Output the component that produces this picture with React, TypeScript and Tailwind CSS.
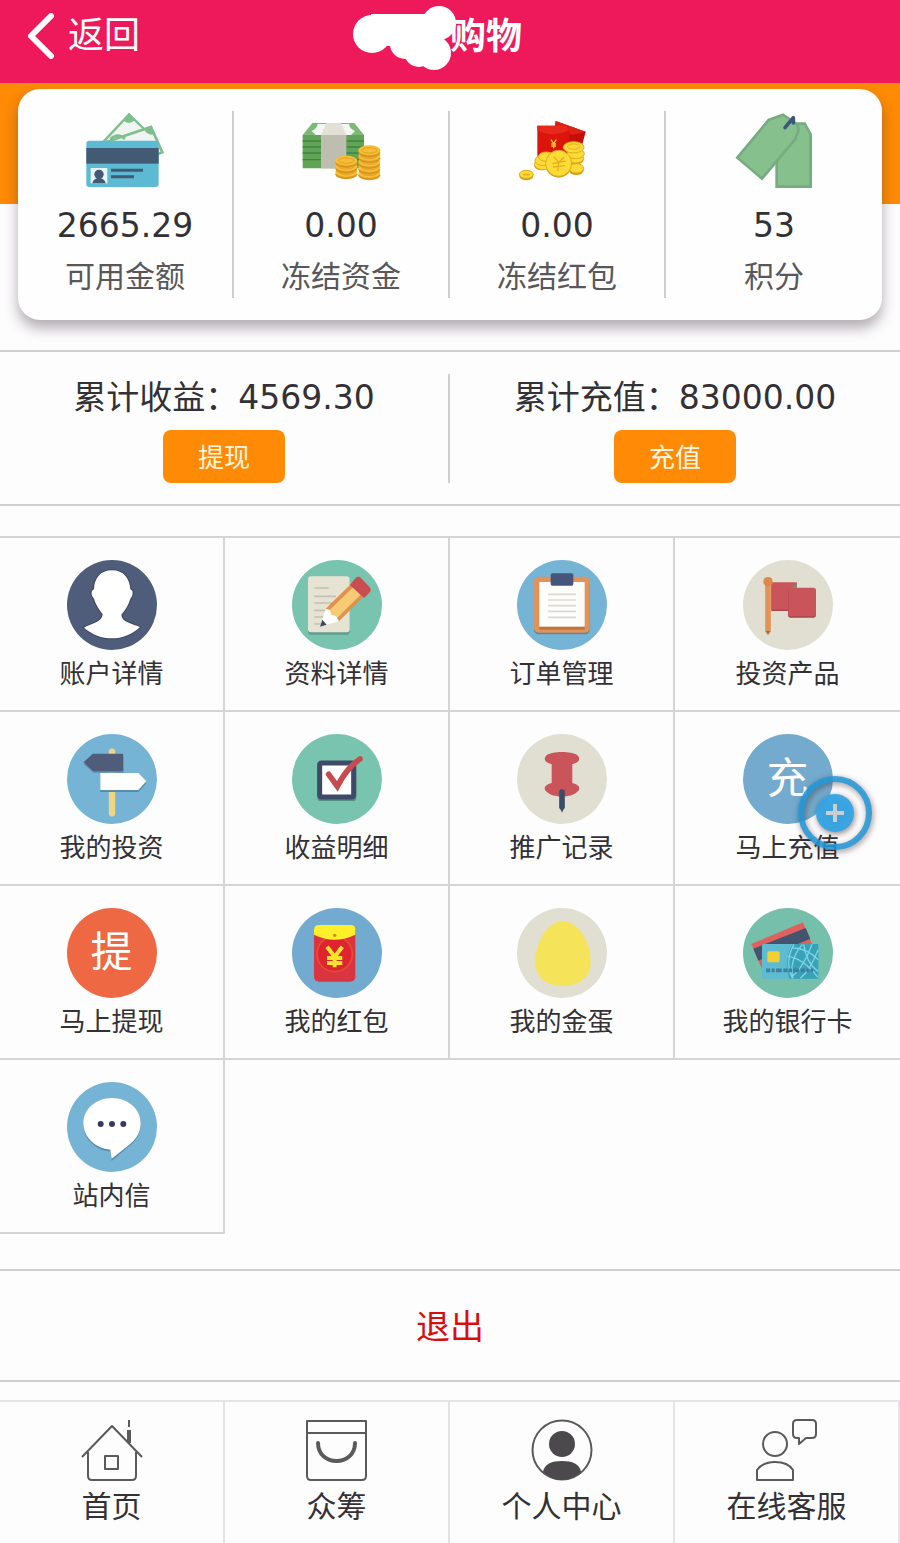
import type { ReactNode } from 'react';

type Entry = { label: string; icon: ReactNode };

function CardIcon({ children }: { children: ReactNode }) {
    return (
        <svg viewBox="0 0 240 240" className="size-20" aria-hidden="true">
            {children}
        </svg>
    );
}

function Disc({ color, children }: { color: string; children?: ReactNode }) {
    return (
        <svg viewBox="0 0 270 270" className="size-[90px]" aria-hidden="true">
            <circle cx="135" cy="135" r="135" fill={color} />
            {children}
        </svg>
    );
}

function NavIcon({ children }: { children: ReactNode }) {
    return (
        <svg
            viewBox="0 0 64 64"
            className="size-16"
            fill="none"
            stroke="#5b595b"
            strokeWidth="2"
            strokeLinejoin="round"
            aria-hidden="true"
        >
            {children}
        </svg>
    );
}

/* ---- balance card ---- */

function BankCardIcon() {
    return (
        <CardIcon>
            <path d="M132 10 L196 72 L182 110 L50 98Z" fill="#f1f5f1" stroke="#7fbf8e" strokeWidth="7" />
            <path d="M132 6 L114 28 Q132 44 151 27Z" fill="#7fbf8e" />
            <path d="M66 92 L198 48 L232 124 L190 140Z" fill="#f1f5f1" stroke="#7fbf8e" strokeWidth="8" />
            <path d="M200 44 L178 54 Q184 74 211 71Z" fill="#7fbf8e" />
            <path d="M76 84 Q100 64 120 84" fill="none" stroke="#7fbf8e" strokeWidth="8" />
            <rect x="4" y="89" width="217" height="139" rx="9" fill="#5cbbd2" />
            <rect x="4" y="111" width="217" height="47" fill="#435a75" />
            <rect x="17" y="171" width="50" height="46" fill="#eaf5f9" />
            <circle cx="42" cy="190" r="14" fill="#435a75" />
            <path d="M22 217 Q24 205 37 202 H47 Q60 205 62 217Z" fill="#435a75" />
            <path d="M78 178 H174 M78 197 H147" stroke="#435a75" strokeWidth="9" />
        </CardIcon>
    );
}

function CoinStack({ x, top, count }: { x: number; top: number; count: number }) {
    return (
        <>
            {Array.from({ length: count }, (_, i) => {
                const y = top + (count - 1 - i) * 17;
                return (
                    <g key={i}>
                        <ellipse cx={x} cy={y + 7} rx="33" ry="15" fill="#dc961f" />
                        <ellipse cx={x} cy={y} rx="33" ry="15" fill="#f5be35" />
                        <ellipse cx={x} cy={y} rx="23" ry="8" fill="none" stroke="#e3a227" strokeWidth="3" />
                    </g>
                );
            })}
        </>
    );
}

function CashIcon() {
    return (
        <CardIcon>
            <path d="M5 72 L34 36 H160 L189 72Z" fill="#7fb977" />
            <path d="M32 60 Q48 54 50 39 H144 Q146 54 162 60 L150 72 H44Z" fill="#f3f7f3" />
            <path d="M5 72 H189 V172 H5Z" fill="#62a455" />
            <path d="M5 90 H189 M5 108 H189 M5 126 H189 M5 146 H189" stroke="#3f8245" strokeWidth="4" />
            <path d="M60 72 L76 36 H120 L136 72Z" fill="#e3e0d6" />
            <rect x="60" y="72" width="76" height="100" fill="#bdbdb0" />
            <CoinStack x={205} top={118} count={5} />
            <CoinStack x={136} top={149} count={3} />
        </CardIcon>
    );
}

function RedPacketsIcon() {
    return (
        <CardIcon>
            <path d="M116 30 L206 62 L188 130 L104 120Z" fill="#c40e0a" />
            <path d="M116 30 L206 62 L166 72 L114 50Z" fill="#e02015" />
            <path d="M61 44 H146 L156 58 V146 H61Z" fill="#dc150c" />
            <path d="M61 44 H146 L156 58 Q106 82 61 58Z" fill="#e8281a" />
            <path d="M102 86 L110 98 L118 86 M110 98 V112 M103 99 H117 M103 105 H117" stroke="#f9c92a" strokeWidth="4" fill="none" />
            <g fill="#d79a17">
                <ellipse cx="28" cy="195" rx="21" ry="13" />
                <ellipse cx="178" cy="178" rx="22" ry="14" />
                <ellipse cx="176" cy="147" rx="24" ry="14" />
                <ellipse cx="74" cy="164" rx="22" ry="14" />
                <circle cx="125" cy="161" r="39" />
            </g>
            <g fill="#fbdc36" stroke="#e3a91d" strokeWidth="3">
                <ellipse cx="28" cy="190" rx="21" ry="12" />
                <ellipse cx="178" cy="172" rx="22" ry="14" />
                <ellipse cx="176" cy="142" rx="24" ry="14" />
                <ellipse cx="176" cy="128" rx="26" ry="15" />
                <ellipse cx="170" cy="109" rx="31" ry="17" />
                <ellipse cx="78" cy="160" rx="26" ry="16" />
                <ellipse cx="80" cy="148" rx="26" ry="16" />
                <ellipse cx="88" cy="137" rx="24" ry="14" />
                <circle cx="125" cy="157" r="39" />
            </g>
            <path d="M110 137 L125 154 L142 138 M125 154 L122 180 M106 158 L146 150 M108 168 L144 164" stroke="#e5ae22" strokeWidth="4" fill="none" />
            <ellipse cx="170" cy="107" rx="19" ry="8" fill="none" stroke="#e5ae22" strokeWidth="3" />
            <path d="M18 191 H38" stroke="#e5ae22" strokeWidth="5" />
        </CardIcon>
    );
}

function TagsIcon() {
    return (
        <CardIcon>
            <path d="M128 70 L150 38 H212 L230 70 V227 H128Z" fill="#86c18d" stroke="#77ab80" strokeWidth="8" />
            <path d="M10 140 L104 27 L147 11 L184 36 Q196 46 192 62 L184 84 L84 203Z" fill="#86c18d" stroke="#77ab80" strokeWidth="8" />
            <path d="M153 50 L178 20 V36" stroke="#3f567b" strokeWidth="11" strokeLinecap="round" strokeLinejoin="round" fill="none" />
        </CardIcon>
    );
}

/* ---- menu grid ---- */

const menu: Entry[] = [
    {
        label: '账户详情',
        icon: (
            <Disc color="#4f5d7b">
                <path
                    d="M135 31 C100 31 82 55 81 88 C71 92 72 106 81 116 C86 135 98 150 107 163 C106 186 75 190 51 203 C75 224 105 235 135 235 C165 235 195 224 219 201 C195 190 163 186 163 164 C174 150 185 135 190 116 C199 106 200 92 190 88 C188 55 170 31 135 31Z"
                    fill="#fff"
                    stroke="#3e4a68"
                    strokeWidth="7"
                    paintOrder="stroke"
                />
            </Disc>
        ),
    },
    {
        label: '资料详情',
        icon: (
            <Disc color="#78c4af">
                <rect x="48" y="54" width="125" height="170" rx="9" fill="#5f9f8e" />
                <rect x="48" y="49" width="125" height="168" rx="9" fill="#e7e3d3" />
                <path d="M67 84 H110 M67 109 H132 M67 129 H120 M67 151 H115 M67 171 H110 M67 192 H90" stroke="#c4c0b3" strokeWidth="5" />
                <path d="M180 69 L219 106 L141 184 L101 146Z" fill="#e0914e" />
                <path d="M188 77 L211 99 L133 176 L109 154Z" fill="#f7cb76" />
                <path d="M174 75 L191 54 Q199 47 207 54 L233 82 Q240 91 232 98 L216 114Z" fill="#c94c50" />
                <path d="M101 146 L113 149 L118 164 L132 168 L141 184 L84 200Z" fill="#fff" />
                <path d="M91 179 L104 194 L84 200Z" fill="#3c4763" />
            </Disc>
        ),
    },
    {
        label: '订单管理',
        icon: (
            <Disc color="#76b4d6">
                <rect x="51" y="55" width="167" height="168" rx="14" fill="#5a87a3" />
                <rect x="51" y="50" width="167" height="168" rx="14" fill="#e2935a" />
                <rect x="67" y="195" width="136" height="14" fill="#c1733f" />
                <rect x="67" y="66" width="136" height="134" fill="#fdfdfc" />
                <path d="M93 103 H177 M93 120 H177 M93 137 H177 M93 154 H177 M93 172 H177" stroke="#dcd9cd" strokeWidth="5" />
                <rect x="101" y="40" width="68" height="37" rx="5" fill="#46567a" />
            </Disc>
        ),
    },
    {
        label: '投资产品',
        icon: (
            <Disc color="#e0dfd1">
                <path d="M85 70 H158 V153 H85Z" fill="#a9444b" />
                <path d="M85 67 H162 L138 95 V149 H85Z" fill="#c9555a" />
                <path d="M162 67 V84 L136 93Z" fill="#7a8870" />
                <rect x="135" y="86" width="84" height="87" rx="8" fill="#a9444b" />
                <rect x="136" y="83" width="83" height="86" rx="8" fill="#c9555a" />
                <path d="M75 74 V214" stroke="#e2935a" strokeWidth="17" />
                <path d="M67 213 H83 L75 225Z" fill="#a2704d" />
                <circle cx="75" cy="65" r="14" fill="#dc8846" />
            </Disc>
        ),
    },
    {
        label: '我的投资',
        icon: (
            <Disc color="#76b4d6">
                <path d="M135 53 V238" stroke="#f2d581" strokeWidth="19" strokeLinecap="round" />
                <path d="M50 90 L80 64 H170 V116 H80Z" fill="#598bab" />
                <path d="M50 84 L78 59 H168 V111 H78Z" fill="#4f5d7b" />
                <path d="M100 122 H214 L238 148 L214 174 H100Z" fill="#598bab" />
                <path d="M100 117 H214 L238 142 L214 168 H100Z" fill="#fff" />
            </Disc>
        ),
    },
    {
        label: '收益明细',
        icon: (
            <Disc color="#78c4af">
                <rect x="76" y="84" width="117" height="117" rx="10" fill="#568f81" />
                <rect x="83" y="87" width="102" height="102" rx="5" fill="#fff" stroke="#3e4a68" strokeWidth="15" />
                <path d="M110 121 L136 157 C155 120 175 94 204 75" fill="none" stroke="#c54b50" strokeWidth="17" strokeLinecap="round" />
            </Disc>
        ),
    },
    {
        label: '推广记录',
        icon: (
            <Disc color="#e0dfd1">
                <path
                    d="M104 90 C82 86 78 72 90 63 C106 51 164 51 180 63 C192 72 188 86 166 90 V147 C188 152 193 164 180 174 C164 192 106 192 90 174 C77 164 82 152 104 147Z"
                    fill="#c95459"
                />
                <path d="M135 174 V218" stroke="#3e4a68" strokeWidth="17" strokeLinecap="round" />
                <path d="M128 220 L135 236 L142 220Z" fill="#3e4a68" />
            </Disc>
        ),
    },
    {
        label: '马上充值',
        icon: <span className="flex size-[90px] items-center justify-center rounded-full bg-[#74aacd] text-[42px] leading-none text-white">充</span>,
    },
    {
        label: '马上提现',
        icon: <span className="flex size-[90px] items-center justify-center rounded-full bg-[#ee6843] text-[42px] leading-none text-white">提</span>,
    },
    {
        label: '我的红包',
        icon: (
            <Disc color="#73abd0">
                <rect x="66" y="51" width="124" height="170" rx="15" fill="#d93440" />
                <circle cx="128" cy="138" r="53" fill="#df2331" stroke="#e2512f" strokeWidth="5" />
                <path d="M66 80 V64 Q67 51 80 51 H176 Q190 51 190 64 V80 Q128 110 66 80Z" fill="#fdf02a" />
                <circle cx="128" cy="82" r="5" fill="#d8862b" />
                <path d="M105 116 L128 146 L151 116 M128 146 V178 M105 150 H151 M105 165 H151" fill="none" stroke="#fbe32b" strokeWidth="12" />
            </Disc>
        ),
    },
    {
        label: '我的金蛋',
        icon: (
            <Disc color="#e0dfd1">
                <path d="M137 40 C185 40 221 105 221 160 C221 210 185 234 137 234 C90 234 55 210 55 160 C55 105 91 40 137 40Z" fill="#f5e35a" />
            </Disc>
        ),
    },
    {
        label: '我的银行卡',
        icon: (
            <Disc color="#76bfab">
                <path d="M25 108 L180 43 L207 108 L56 181Z" fill="#e0605e" />
                <path d="M31 122 L188 60 L202 92 L46 158Z" fill="#43546e" />
                <rect x="57" y="108" width="169" height="104" rx="5" fill="#5dbbd2" />
                <path d="M150 108 H226 V212 H139 Q122 150 150 108Z" fill="#38a2b9" />
                <path
                    d="M153 109 Q124 160 148 211 M178 109 Q136 160 150 211 M182 109 Q190 165 225 190 M207 109 Q180 180 148 205 M225 126 Q200 190 172 211 M134 145 Q180 150 225 208 M150 120 Q190 120 226 155"
                    fill="none"
                    stroke="#81d2e4"
                    strokeWidth="4"
                />
                <rect x="73" y="130" width="37" height="33" rx="5" fill="#f2cf33" />
                <path d="M69 187 H210" stroke="#407f9f" strokeWidth="11" strokeDasharray="13 4 9 4 17 5" />
            </Disc>
        ),
    },
    {
        label: '站内信',
        icon: (
            <Disc color="#76b4d6">
                <path
                    d="M135 54 C183 54 221 87 221 128 C221 158 205 180 182 196 L134 237 L130 208 C85 205 49 169 49 128 C49 87 87 54 135 54Z"
                    fill="#558aa9"
                />
                <path
                    d="M135 48 C183 48 221 81 221 124 C221 154 205 176 182 192 L134 230 L130 203 C85 200 49 165 49 124 C49 81 87 48 135 48Z"
                    fill="#fff"
                />
                <g fill="#343b5e">
                    <circle cx="101" cy="126" r="9" />
                    <circle cx="135" cy="126" r="9" />
                    <circle cx="169" cy="126" r="9" />
                </g>
            </Disc>
        ),
    },
];

const balances = [
    { label: '可用金额', value: '2665.29', icon: <BankCardIcon /> },
    { label: '冻结资金', value: '0.00', icon: <CashIcon /> },
    { label: '冻结红包', value: '0.00', icon: <RedPacketsIcon /> },
    { label: '积分', value: '53', icon: <TagsIcon /> },
];

const totals = [
    { label: '累计收益：', value: '4569.30', action: '提现' },
    { label: '累计充值：', value: '83000.00', action: '充值' },
];

const tabs: Entry[] = [
    {
        label: '首页',
        icon: (
            <NavIcon>
                <path d="M2 39 L32 8 L62 39" />
                <path d="M8 34 V58 Q8 62 12 62 H52 Q56 62 56 58 V34" />
                <rect x="25" y="38" width="13" height="13" />
                <path d="M49 2 V9" />
                <path d="M49 12 V25" strokeWidth="4" />
            </NavIcon>
        ),
    },
    {
        label: '众筹',
        icon: (
            <NavIcon>
                <path d="M2 3 H61 V58 Q61 62 57 62 H6 Q2 62 2 58Z M2 15 H61" />
                <path d="M13 25 C13 49 50 49 50 25" strokeWidth="4" strokeLinecap="round" />
            </NavIcon>
        ),
    },
    {
        label: '个人中心',
        icon: (
            <NavIcon>
                <circle cx="32" cy="32" r="29.5" />
                <circle cx="32" cy="26" r="13" fill="#4b494b" stroke="none" />
                <path d="M13 54 C14 46 22 43 32 43 C42 43 50 46 51 54 Q42 62 32 62 Q22 62 13 54Z" fill="#4b494b" stroke="none" />
            </NavIcon>
        ),
    },
    {
        label: '在线客服',
        icon: (
            <NavIcon>
                <circle cx="20" cy="26" r="12" />
                <path d="M2 62 V52 Q8 44 20 44 Q33 44 38 52 V62Z" />
                <path d="M42 2 H57 Q61 2 61 6 V16 Q61 20 57 20 H51 L44 26 V20 H42 Q38 20 38 16 V6 Q38 2 42 2Z" />
            </NavIcon>
        ),
    },
];

function Header() {
    return (
        <header className="relative flex h-[83px] items-start justify-center bg-[#ee195b] text-white">
            <a href="#back" className="absolute top-0 left-7 flex h-[72px] items-center gap-3 text-4xl">
                <svg viewBox="0 0 28 46" className="h-[46px] w-7" fill="none" stroke="currentColor" strokeWidth="6" strokeLinecap="round" strokeLinejoin="round" aria-hidden="true">
                    <path d="M23 3 L3 23 L23 43" />
                </svg>
                返回
            </a>
            <h1 className="relative pl-[72px] text-4xl leading-[73px] font-bold">
                购物
                {/* painted-over part of the shop name */}
                <svg viewBox="0 0 104 66" className="absolute top-[6px] -left-[25px] h-[66px] w-[104px]" fill="#fff" aria-hidden="true">
                    <rect x="18" y="8" width="72" height="32" />
                    <circle cx="19" cy="28" r="19" />
                    <circle cx="86" cy="17" r="17" />
                    <circle cx="52" cy="38" r="15" />
                    <circle cx="66" cy="46" r="15" />
                    <circle cx="81" cy="47" r="17" />
                </svg>
            </h1>
        </header>
    );
}

export default function App() {
    return (
        <div className="bg-[#fefdfe] font-['DejaVu_Sans','Noto_Sans_CJK_SC',sans-serif] text-[#333136]">
            <Header />

            <main>
                <section className="bg-[linear-gradient(#ff8a05_121px,transparent_121px)] px-[18px] pt-[6px] pb-[30px]">
                    <div className="grid grid-cols-4 rounded-[22px] bg-[#fefefe] py-[22px] shadow-[0_8px_14px_rgba(60,50,60,0.4)]">
                        {balances.map((b) => (
                            <div key={b.label} className="flex flex-col items-center border-r-2 border-[#cfcdd1] last:border-r-0">
                                {b.icon}
                                <p className="mt-[13px] text-[33px] leading-11">{b.value}</p>
                                <p className="mt-2 text-3xl leading-[42px] text-[#59575a]">{b.label}</p>
                            </div>
                        ))}
                    </div>
                </section>

                <section className="grid grid-cols-2 border-y-2 border-[#d0ced1] pt-[22px] pb-[21px]">
                    {totals.map((t) => (
                        <div key={t.action} className="flex flex-col items-center border-r-2 border-[#d0ced1] last:border-r-0">
                            <p className="text-[33px] leading-12">
                                {t.label}
                                {t.value}
                            </p>
                            <button type="button" className="mt-2 h-[53px] w-[122px] rounded-lg bg-[#ff8a05] pt-1 text-[26px] text-[#fff6e0]">
                                {t.action}
                            </button>
                        </div>
                    ))}
                </section>

                <nav className="relative mt-[30px] grid grid-cols-4 border-t-2 border-[#d6d4d7]">
                    {menu.map((m) => (
                        <a
                            key={m.label}
                            href="#menu"
                            className="flex flex-col items-center border-r-2 border-b-2 border-[#d6d4d7] pt-[22px] pb-5 nth-[4n]:border-r-0"
                        >
                            {m.icon}
                            <span className="mt-2 text-[26px] leading-8">{m.label}</span>
                        </a>
                    ))}

                    {/* floating touch button */}
                    <button type="button" aria-label="快捷菜单" className="absolute top-[237px] right-[27px] size-[76px] rounded-full">
                        <svg viewBox="0 0 76 76" className="size-full overflow-visible drop-shadow-[1px_2px_3px_rgba(60,40,40,0.6)]" aria-hidden="true">
                            <circle cx="38" cy="38" r="34" fill="none" stroke="#2299dc" strokeOpacity="0.85" strokeWidth="6" />
                            <circle cx="38" cy="38" r="19" fill="#36a5e6" fillOpacity="0.95" />
                            <path d="M38 29 V47 M29 38 H47" stroke="#c9cfd2" strokeWidth="4" />
                        </svg>
                    </button>
                </nav>

                <button type="button" className="mt-[35px] block h-[113px] w-full border-y-2 border-[#d0ced1] pt-1 text-[34px] text-[#d90d0d]">
                    退出
                </button>
            </main>

            <footer className="mt-[18px] grid grid-cols-4 border-t-2 border-[#e5e3e6]">
                {tabs.map((t) => (
                    <a key={t.label} href="#tab" className="flex flex-col items-center border-r-2 border-[#e5e3e6] pt-4 pb-4">
                        {t.icon}
                        <span className="mt-[5px] text-3xl leading-10">{t.label}</span>
                    </a>
                ))}
            </footer>
        </div>
    );
}
